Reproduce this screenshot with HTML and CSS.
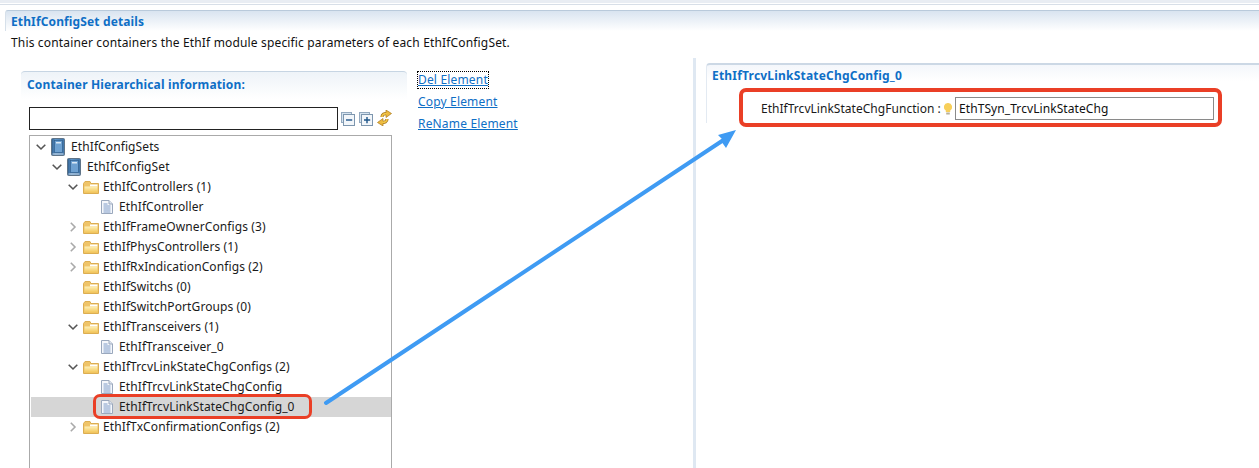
FILE: index.html
```html
<!DOCTYPE html>
<html lang="en">
<head>
<meta charset="utf-8">
<title>EthIfConfigSet details</title>
<link rel="stylesheet" href="styles.css">
</head>
<body>
<svg class="defs" width="0" height="0" aria-hidden="true">
  <defs>
    <linearGradient id="bookFill" x1="0" y1="0" x2="1" y2="0"><stop offset="0" stop-color="#2f5d8c"/><stop offset=".3" stop-color="#5c93c6"/><stop offset="1" stop-color="#3f74a8"/></linearGradient>
    <linearGradient id="folderFill" x1="0" y1="0" x2="0" y2="1"><stop offset="0" stop-color="#fdf0b8"/><stop offset="1" stop-color="#f3c658"/></linearGradient>
    <symbol id="book" viewBox="0 0 14 18"><rect x=".5" y=".5" width="13" height="17" rx="1" fill="url(#bookFill)" stroke="#5f7488"/><rect x="3.5" y="2.5" width="8" height="12" fill="#6ea1d1" stroke="#2f5f8d" stroke-width=".7"/><rect x="5" y="4" width="5" height="1.5" fill="#d8e8f5"/><rect x="1.5" y="15.5" width="11" height="1" fill="#cfdce8"/></symbol>
    <symbol id="folder" viewBox="0 0 16 13"><path d="M.5 2.500 2 .5h5l1 2h7.500v10H.5z" fill="#efc468" stroke="#dcae52"/><path d="M7 3.500h7.500v2H7z" fill="#fff"/><path d="M1.500 5.500h13v6h-13z" fill="url(#folderFill)"/></symbol>
    <symbol id="doc" viewBox="0 0 12 14"><path d="M.5.5h7.500l3.500 3.500v9.500H.5z" fill="#f5f7fb" stroke="#9aa8bd"/><path d="M8 .5V4h3.500" fill="#dde4ef" stroke="#9aa8bd"/><path d="M2.500 4h4M2.500 6h7M2.500 8h7M2.500 10h7M2.500 12h7" stroke="#7f9cc8"/></symbol>
    <symbol id="open" viewBox="0 0 10 10"><path d="M.7 2.800 5 7l4.300-4.200"/></symbol>
    <symbol id="shut" viewBox="0 0 10 10"><path d="M2.800.7 7 5 2.800 9.300"/></symbol>
  </defs>
</svg>
<div class="page">
  <div class="topband"></div>
  <header class="details">
    <h1 class="sec-title">EthIfConfigSet details</h1>
    <p class="desc">This container containers the EthIf module specific parameters of each EthIfConfigSet.</p>
  </header>
  <main class="columns">
    <div class="left">
      <section class="hier">
        <h2 class="hier-title">Container Hierarchical information:</h2>
        <div class="search-row">
          <input class="search" type="text" aria-label="filter">
          <svg class="tool" width="14" height="14" viewBox="0 0 14 14"><rect x=".5" y=".5" width="10" height="10" fill="#d5e3ef" stroke="#93a9bf"/><rect x="2.500" y="2.500" width="11" height="11" fill="#f2f6fa" stroke="#7d96ae"/><path d="M5 8h6.200" stroke="#1d5488" stroke-width="1.400"/></svg>
          <svg class="tool" width="14" height="14" viewBox="0 0 14 14"><rect x=".5" y=".5" width="10" height="10" fill="#d5e3ef" stroke="#93a9bf"/><rect x="2.500" y="2.500" width="11" height="11" fill="#f2f6fa" stroke="#7d96ae"/><path d="M5 8h6.200M8 5v6.200" stroke="#1d5488" stroke-width="1.400"/></svg>
          <svg class="tool sync" width="15" height="16" viewBox="0 0 15 16"><path d="M5 7C5 4.500 7.500 3.200 10 3.800" fill="none" stroke="#a9781b" stroke-width="3.200"/><path d="M9 0l5.500 3.500L9 7.500z" fill="#edb93f" stroke="#a9781b" stroke-width=".7"/><path d="M5 7C5 4.500 7.500 3.200 10 3.800" fill="none" stroke="#f2c648" stroke-width="1.700"/><path d="M10 9c0 2.500-2.500 3.800-5 3.200" fill="none" stroke="#a9781b" stroke-width="3.200"/><path d="M6 16 .5 12.500 6 8.500z" fill="#edb93f" stroke="#a9781b" stroke-width=".7"/><path d="M10 9c0 2.500-2.500 3.800-5 3.200" fill="none" stroke="#f2c648" stroke-width="1.700"/></svg>
        </div>
        <div class="tree">
          <div class="row l0"><svg class="tw"><use href="#open"/></svg><svg class="ic book"><use href="#book"/></svg><span>EthIfConfigSets</span></div>
          <div class="row l1"><svg class="tw"><use href="#open"/></svg><svg class="ic book"><use href="#book"/></svg><span>EthIfConfigSet</span></div>
          <div class="row l2"><svg class="tw"><use href="#open"/></svg><svg class="ic folder"><use href="#folder"/></svg><span>EthIfControllers (1)</span></div>
          <div class="row l3"><span class="tw-gap"></span><svg class="ic doc"><use href="#doc"/></svg><span>EthIfController</span></div>
          <div class="row l2"><svg class="tw closed"><use href="#shut"/></svg><svg class="ic folder"><use href="#folder"/></svg><span>EthIfFrameOwnerConfigs (3)</span></div>
          <div class="row l2"><svg class="tw closed"><use href="#shut"/></svg><svg class="ic folder"><use href="#folder"/></svg><span>EthIfPhysControllers (1)</span></div>
          <div class="row l2"><svg class="tw closed"><use href="#shut"/></svg><svg class="ic folder"><use href="#folder"/></svg><span>EthIfRxIndicationConfigs (2)</span></div>
          <div class="row l2"><span class="tw-gap"></span><svg class="ic folder"><use href="#folder"/></svg><span>EthIfSwitchs (0)</span></div>
          <div class="row l2"><span class="tw-gap"></span><svg class="ic folder"><use href="#folder"/></svg><span>EthIfSwitchPortGroups (0)</span></div>
          <div class="row l2"><svg class="tw"><use href="#open"/></svg><svg class="ic folder"><use href="#folder"/></svg><span>EthIfTransceivers (1)</span></div>
          <div class="row l3"><span class="tw-gap"></span><svg class="ic doc"><use href="#doc"/></svg><span>EthIfTransceiver_0</span></div>
          <div class="row l2"><svg class="tw"><use href="#open"/></svg><svg class="ic folder"><use href="#folder"/></svg><span>EthIfTrcvLinkStateChgConfigs (2)</span></div>
          <div class="row l3"><span class="tw-gap"></span><svg class="ic doc"><use href="#doc"/></svg><span>EthIfTrcvLinkStateChgConfig</span></div>
          <div class="row l3 selected"><span class="tw-gap"></span><svg class="ic doc"><use href="#doc"/></svg><span>EthIfTrcvLinkStateChgConfig_0</span></div>
          <div class="row l2"><svg class="tw closed"><use href="#shut"/></svg><svg class="ic folder"><use href="#folder"/></svg><span>EthIfTxConfirmationConfigs (2)</span></div>
        </div>
      </section>
      <nav class="links">
        <a href="#" class="focused">Del Element</a>
        <a href="#">Copy Element</a>
        <a href="#">ReName Element</a>
      </nav>
    </div>
    <div class="right">
      <section class="config">
        <h2 class="config-title">EthIfTrcvLinkStateChgConfig_0</h2>
        <div class="field">
          <label class="field-label" for="fn">EthIfTrcvLinkStateChgFunction :</label>
          <svg class="bulb" width="8" height="12" viewBox="0 0 8 12"><path d="M4 0a4 4 0 0 1 2.200 7.400V9H1.800V7.400A4 4 0 0 1 4 0z" fill="#f7cf5a"/><rect x="2.200" y="9.500" width="3.600" height="2" fill="#b8b09a"/></svg>
          <input id="fn" class="field-input" type="text" value="EthTSyn_TrcvLinkStateChg">
        </div>
      </section>
    </div>
  </main>
  <div class="mark mark-row"></div>
  <div class="mark mark-field"></div>
  <svg class="arrow" width="1259" height="468" viewBox="0 0 1259 468">
    <path d="M326 403L725 139" stroke="#3f9bf3" stroke-width="4" stroke-linecap="round" fill="none"/>
    <path d="M736 130L718 135L723 140L721 141L726 148Z" fill="#3f9bf3"/>
  </svg>
</div>
</body>
</html>
```

FILE: styles.css
```css
* { box-sizing: border-box; }
html, body { margin: 0; padding: 0; background: #fff; }
.defs { position: absolute; }
.page {
  position: relative;
  width: 1259px;
  height: 468px;
  overflow: hidden;
  font-family: "Noto Sans", "Open Sans", sans-serif;
  font-size: 12px;
  color: #1a1a1a;
}
.topband { height: 5px; background: linear-gradient(#e9edf3 3px, #fff 3px); border-bottom: 1px solid #d8dfe8; margin-bottom: 5px; }
.details { margin-left: 5px; height: 47px; }
.sec-title {
  margin: 0;
  height: 21px;
  padding: 2px 6px 0 5px;
  font-size: 12px;
  line-height: 18px;
  font-weight: 700;
  letter-spacing: .13px;
  color: #0f6fc6;
  background: linear-gradient(#d9e4f0, #fff);
  border-top: 1px solid #b9cadb;
  border-left: 1px solid #d6e0ea;
  border-top-left-radius: 3px;
}
.desc { margin: 3px 0 0 6px; line-height: 18px; color: #111; letter-spacing: .16px; }
.columns { display: flex; height: 411px; margin-top: 4px; }
.left { display: flex; width: 693px; padding-left: 21px; padding-top: 10px; }
.hier { width: 386px; }
.hier-title {
  margin: 0;
  height: 28px;
  padding: 4px 6px 0;
  font-size: 12px;
  line-height: 18px;
  font-weight: 700;
  letter-spacing: .15px;
  color: #0f6fc6;
  background: linear-gradient(#eef3f8, #fff);
  border-top: 1px solid #c7d5e3;
  border-radius: 4px 4px 0 0;
}
.search-row { display: flex; align-items: center; margin: 8px 0 0 8px; height: 23px; }
.search { width: 309px; height: 23px; border: 1px solid #222; background: #fff; padding: 0; }
.tool { margin-left: 3px; flex: none; }
.tool + .tool { margin-left: 4px; }
.tool.sync { margin-left: 4px; margin-top: -2px; }
.tree { margin: 5px 0 0 8px; width: 363px; height: 340px; border: 1px solid #aaa; padding-top: 1px; padding-left: 1px; }
.row { display: flex; align-items: center; height: 20px; line-height: 20px; white-space: nowrap; letter-spacing: .1px; }
.row.l0 { padding-left: 5px; }
.row.l1 { padding-left: 21px; }
.row.l2 { padding-left: 37px; }
.row.l3 { padding-left: 53px; }
.selected { background: #d6d6d6; margin-right: 0; }
.tw { width: 10px; height: 10px; flex: none; margin-right: 5px; fill: none; stroke: #555; stroke-width: 1.600; }
.tw.closed { stroke: #aaa; }
.tw-gap { width: 15px; flex: none; }
.ic { flex: none; }
.book { width: 14px; height: 18px; margin-right: 6px; }
.folder { width: 16px; height: 13px; margin-right: 4px; }
.doc { width: 12px; height: 14px; margin-right: 6px; margin-left: 2px; }
.links { display: flex; flex-direction: column; margin-left: 11px; margin-top: 0; align-items: flex-start; letter-spacing: .17px; }
.links a { height: 22px; line-height: 20px; color: #0f6fc6; text-decoration: underline; }
.links .focused { height: 16px; line-height: 15px; margin-top: 1px; margin-bottom: 4px; outline: 1px dotted #000; }
.right { flex: 1; border-left: 3px solid #dfe8f2; padding: 0 0 0 10px; margin-top: -3px; }
.config { border-top: 2px solid #ccd8e5; border-left: 1px solid #e3eaf2; border-radius: 4px 0 0 0; height: 60px; margin-top: 5px; background: linear-gradient(#f4f7fb, #fff 16px); }
.config-title { margin: 0; height: 24px; padding: 2px 6px 0 5px; font-size: 12px; line-height: 18px; font-weight: 700; letter-spacing: .2px; color: #0f6fc6; }
.field { display: flex; align-items: center; height: 23px; margin-top: 8px; padding-left: 54px; }
.field-label { width: 180px; white-space: nowrap; letter-spacing: .03px; }
.bulb { margin-left: 3px; margin-right: 3px; flex: none; }
.field-input { width: 259px; height: 23px; border: 1px solid #8a8a8a; padding: 0 3px; font: inherit; letter-spacing: .08px; color: #111; }
.mark { position: absolute; border: 4px solid #ea3f26; border-radius: 7px; }
.mark-row { left: 93px; top: 394px; width: 219px; height: 25px; border-width: 3px; }
.mark-field { left: 739px; top: 88px; width: 483px; height: 39px; }
.arrow { position: absolute; left: 0; top: 0; pointer-events: none; }
```
